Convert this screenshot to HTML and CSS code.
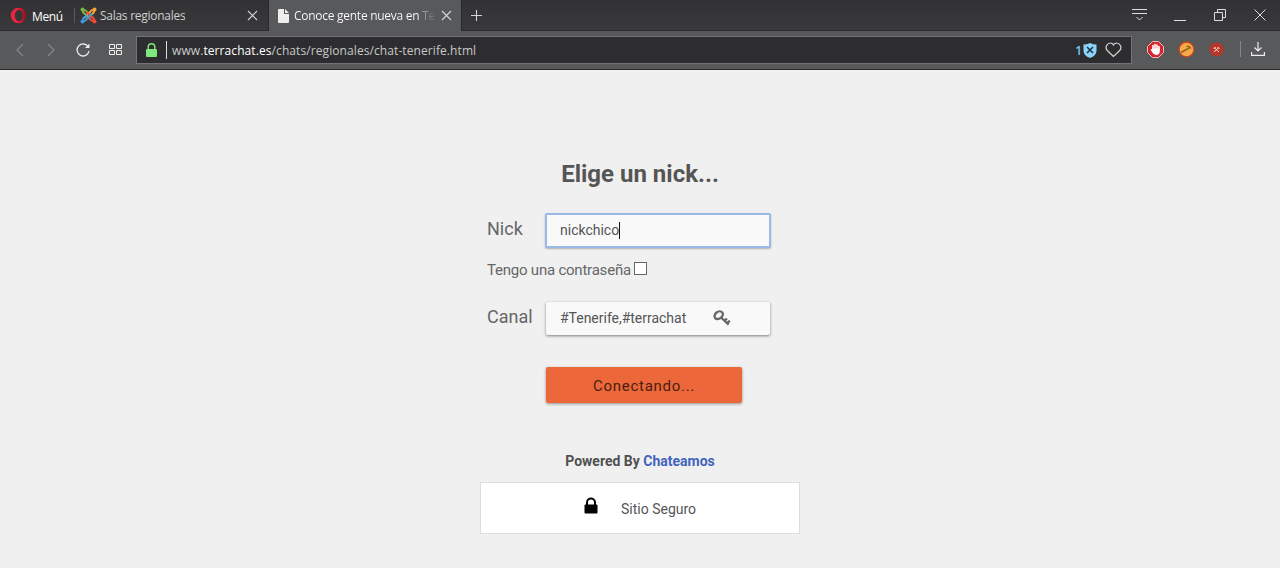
FILE: index.html
```html
<!DOCTYPE html>
<html lang="es">
<head>
<meta charset="utf-8">
<title>Conoce gente nueva en Terrachat</title>
<link rel="stylesheet" href="styles.css">
</head>
<body>
<header class="browser">
  <div class="tabs">
    <div class="menu">
      <svg class="opera" width="17" height="17" viewBox="0 0 17 17"><defs><linearGradient id="op" x1="0" x2="1"><stop offset=".4" stop-color="#ed2340"/><stop offset="1" stop-color="#8d101c"/></linearGradient></defs><path fill="url(#op)" fill-rule="evenodd" d="M8.500.7a7.800 7.800 0 1 0 0 15.600a7.800 7.800 0 1 0 0-15.600M8.800 3c2.400 0 3.900 2.300 3.900 5.500s-1.500 5.500-3.900 5.500s-3.900-2.300-3.900-5.500S6.400 3 8.800 3"/></svg>
      <span class="menu-text">Menú</span>
    </div>
    <div class="tab">
      <svg class="joomla" width="17" height="17" viewBox="0 0 17 17" fill="none" stroke-width="2" stroke-linejoin="round"><path stroke="#7cb342" d="M3 3Q2.500 6 5 7l6 5.500M3 3Q6 2.500 7 5l2 2"/><path stroke="#f9a334" d="M14 3Q11 2.500 10 5l-5.500 6M14 3Q14.500 6 12 7l-2 2"/><path stroke="#ef4a36" d="M14 14Q14.500 11 12 10L6.500 5M14 14Q11 14.500 10 12L8 10"/><path stroke="#4298d6" d="M3 14Q6 14.500 7 12l5-5.500M3 14Q2.500 11 5 10l2-2"/><g stroke="none"><circle cx="2.500" cy="2.500" r="2" fill="#7cb342"/><circle cx="14.500" cy="2.500" r="2" fill="#f9a334"/><circle cx="14.500" cy="14.500" r="2" fill="#ef4a36"/><circle cx="2.500" cy="14.500" r="2" fill="#4298d6"/></g></svg>
      <span class="tab-text first">Salas regionales</span>
      <svg class="close" width="11" height="11" viewBox="0 0 11 11"><path d="M1 1l9 9M10 1l-9 9"/></svg>
    </div>
    <div class="tab active">
      <svg class="page-icon" width="11" height="14" viewBox="0 0 11 14"><path fill="#eee" d="M1 0h5v5h5v8q0 1-1 1H1q-1 0-1-1V1q0-1 1-1M7 0l4 4H7z"/></svg>
      <span class="tab-text second">Conoce gente nueva en Te</span>
      <svg class="close" width="11" height="11" viewBox="0 0 11 11"><path d="M1 1l9 9M10 1l-9 9"/></svg>
    </div>
    <svg class="plus" width="11" height="11" viewBox="0 0 11 11"><path d="M5.500 0v11M0 5.500h11"/></svg>
    <div class="window">
      <svg width="15" height="12" viewBox="0 0 15 12"><path d="M0 .5h15M0 4.500h15M4.500 8l3 3 3-3"/></svg>
      <svg width="12" height="12" viewBox="0 0 12 12"><path d="M0 11.500h12"/></svg>
      <svg width="12" height="12" viewBox="0 0 12 12"><path d="M.5 3.500h8v8h-8zM3.500 3.500v-3h8v8h-3"/></svg>
      <svg width="12" height="12" viewBox="0 0 12 12"><path d="M.5.500l11 11M11.500.500l-11 11"/></svg>
    </div>
  </div>
  <div class="toolbar">
    <div class="nav">
      <svg class="dim" width="8" height="12" viewBox="0 0 8 12"><path d="M7 0L1 6l6 6"/></svg>
      <svg class="dim" width="8" height="12" viewBox="0 0 8 12"><path d="M1 0l6 6-6 6"/></svg>
      <svg width="14" height="14" viewBox="0 0 14 14"><path stroke-width="1.300" d="M12.300 4A6 6 0 1 0 13 8"/><path fill="#eee" stroke="none" d="M13.500.5v4.500H9z"/></svg>
      <svg width="13" height="12" viewBox="0 0 13 12"><path d="M.5.500h5v4h-5zM7.500.500h5v4h-5zM.5 6.500h5v4h-5zM7.500 6.500h5v4h-5z"/></svg>
    </div>
    <div class="address">
      <svg class="green-lock" width="11" height="15" viewBox="0 0 11 15"><rect y="6" width="11" height="8" rx="1" fill="#7ee87e"/><path fill="none" stroke="#7ee87e" stroke-width="1.400" d="M2.200 7V4a3.300 3.300 0 0 1 6.600 0v3"/></svg>
      <i class="divider"></i>
      <span class="url">www.<b>terrachat.es</b>/chats/regionales/chat-tenerife.html</span>
      <span class="count">1</span>
      <svg class="shield" width="14" height="15" viewBox="0 0 14 15"><path fill="#8bd3f7" d="M.5 1.500Q4 1.500 7 0q3 1.500 6.500 1.500V8q0 4.500-6.500 7Q.5 12.500.5 8z"/><path stroke="#173247" stroke-width="1.500" d="M4 4l6 6M10 4l-6 6"/></svg>
      <svg class="heart" width="17" height="16" viewBox="0 0 17 16"><path fill="none" stroke="#d5d5d5" stroke-width="1.200" d="M8.500 14.500L2.300 8.500C-.7 5.200 2.500 1 5.500 1q2 0 3 2 1-2 3-2c3 0 6.200 4.200 3.200 7.500z"/></svg>
    </div>
    <div class="extensions">
      <svg width="17" height="17" viewBox="0 0 17 17"><path fill="#d5262e" stroke="#f1b6b5" d="M5.500.500h6l5 5v6l-5 5h-6l-5-5v-6z"/><path fill="none" stroke="#fff" stroke-width="1.600" stroke-linecap="round" d="M6 9V4.500M8 8V3.500M10 8V4M12 9V5.500"/><path fill="#fff" d="M5.200 7.500h7.600v2.500q0 4-3.500 4Q6.500 14 5 11L3.500 8.500q.8-1 1.700.5z"/></svg>
      <svg width="17" height="17" viewBox="0 0 17 17"><circle cx="8.500" cy="8.500" r="7.500" fill="#f9a84a" stroke="#b8471f" stroke-width="1.400"/><path fill="none" stroke="#8d6824" stroke-width="1.500" d="M3 11.500L12 6.500M8.500 5.500q3-.8 4.500 2"/></svg>
      <svg width="15" height="15" viewBox="0 0 15 15"><circle cx="7.500" cy="7.500" r="7" fill="#b73529"/><path fill="none" stroke="#f5d9d3" stroke-width="1" d="M5 10l4.800-4.500M10 10L5.200 5.500M4.700 7l2-2M8.500 5l2 2"/></svg>
      <i class="split"></i>
      <svg width="14" height="14" viewBox="0 0 14 14"><path fill="none" stroke="#eee" stroke-width="1.200" d="M7 0v9M3.500 5.500L7 9l3.500-3.500M.6 10v3.400h12.800V10"/></svg>
    </div>
  </div>
</header>
<main class="content">
  <h1 class="title">Elige un nick...</h1>
  <form class="form">
    <div class="row">
      <span class="label">Nick</span>
      <div class="field focused"><span class="nick">nickchico</span><i class="caret"></i></div>
    </div>
    <div class="password"><span>Tengo una contraseña</span><i class="check"></i></div>
    <div class="row">
      <span class="label">Canal</span>
      <div class="field plain"><span class="channel">#Tenerife,#terrachat</span>
        <svg class="key" width="18" height="16" viewBox="0 0 18 16"><g fill="none" stroke="#686868"><ellipse cx="5.700" cy="5.200" rx="4.500" ry="3.400" stroke-width="2.400" transform="rotate(-38 5.700 5.200)"/><path stroke-width="2.300" d="M7.500 7l8.200 7.700M11.500 10.900l2.400-2.400M14 13.400l2.800-2.800"/></g></svg>
      </div>
    </div>
    <div class="connect">Conectando...</div>
  </form>
  <p class="powered">Powered By <span class="brand">Chateamos</span></p>
  <div class="secure">
    <svg width="14" height="17" viewBox="0 0 14 17"><rect x=".5" y="7.500" width="13" height="9" rx="1"/><path fill="none" stroke="#000" stroke-width="2" d="M3 8V5.500a4 4 0 0 1 8 0v2.500"/></svg>
    <span>Sitio Seguro</span>
  </div>
</main>
</body>
</html>
```
FILE: styles.css
```css
* { box-sizing: border-box; }
body { margin: 0; height: 568px; overflow: hidden; background: #f0f0f0; color: #666; font-family: Roboto, sans-serif; }
svg { display: block; flex: none; }
.browser { height: 70px; background: #58595b; border-bottom: 1px solid #29292a; font: 12px/16px "Open Sans", sans-serif; color: #fff; }
.tabs { display: flex; height: 31px; background: linear-gradient(#323234, #39393b); align-items: center; box-shadow: inset 0 -1px #2b2b2d; }
.menu { display: flex; align-items: center; width: 75px; height: 15px; padding-left: 10px; border-right: 1px solid #59595b; }
.menu-text { margin-left: 5px; padding-top: 2px; letter-spacing: -.35px; }
.tab { display: flex; align-items: center; height: 31px; width: 194px; padding: 0 10px 0 5px; border-right: 1px solid #29292b; }
.tab-text { white-space: nowrap; margin-left: 2px; overflow: hidden; color: #cfcfcf; letter-spacing: -.27px; }
.tab-text.first { margin-left: 3px; }
.tab.active { width: 193px; background: #58595b; padding: 0 9px; }
.tab-text.second { width: 142px; margin-left: 5px; color: transparent; letter-spacing: -.27px; background: linear-gradient(90deg, #fff 0 125px, #aaa 127px, #626365 142px); background-clip: text; }
.close, .plus { stroke: #d5d5d5; stroke-width: 1.1; fill: none; }
.close { margin-left: auto; }
.plus { margin-left: 9px; }
.window { display: flex; align-items: center; gap: 28px; margin-left: auto; padding: 0 14px 1px 0; fill: none; stroke: #ddd; }
.window svg { margin-bottom: 1px; }
.window svg:first-child { margin: 0 -1px 0 0; }
.toolbar { display: flex; height: 38px; align-items: center; }
.nav { display: flex; align-items: center; width: 136px; padding-left: 16px; gap: 23px; fill: none; stroke: #eee; }
.nav svg:nth-child(3) { margin-left: -2px; }
.nav svg:nth-child(4) { margin-left: -4px; }
.dim { stroke: #858688; stroke-width: 1.3; }
.address { display: flex; align-items: center; width: 996px; height: 28px; padding: 0 9px; background: #2d2d2f; border: 1px solid #747476; }
.divider { width: 1px; height: 18px; margin: 0 5px 0 9px; background: #ddd; }
.url { color: #c9c9c9; white-space: nowrap; letter-spacing: .085px; padding-top: 1px; }
.url b { color: #fff; font-weight: 400; }
.count { margin-left: auto; padding-top: 1px; color: #75c7f0; font-weight: 600; }
.shield { margin: 0 8px 0 1px; }
.extensions { display: flex; align-items: center; flex: 1; padding: 0 0 2px 15px; gap: 15px; }
.extensions svg:nth-child(2), .extensions svg:nth-child(3) { margin-left: -1px; }
.extensions svg:nth-child(3) { margin-right: 1px; }
.split { width: 1px; height: 16px; background: #858587; }
.extensions svg:last-child { margin-left: -5px; }
.content { width: 320px; margin: 0 auto; }
.title { margin: 90px 0 0; font: 700 24px/28px Roboto, sans-serif; color: #555; text-align: center; }
.form { padding: 25px 7px 0; }
.row { display: flex; height: 35px; }
.label { width: 58px; font-size: 18px; line-height: 31px; }
.field { display: flex; align-items: center; width: 226px; height: 35px; border-radius: 2px; background: #f9f9f9; font-size: 14px; color: #555; }
.focused { padding: 0 13px 1px; border: 2px solid #9bb8e8; box-shadow: 0 1px 2px #0004; }
.plain { width: 224px; height: 33px; margin: 1px 0 0 1px; padding: 0 14px 1px; box-shadow: 0 1px 3px #0007; }
.caret { width: 1px; height: 17px; background: #111; }
.channel { width: 127px; letter-spacing: -.02px; }
.key { margin-left: 26px; }
.password { display: flex; align-items: center; height: 44px; margin-bottom: 9px; font-size: 15px; letter-spacing: -.22px; }
.check { width: 13px; height: 13px; margin-left: 3px; margin-top: -3px; border: 1px solid #666; background: #fff; }
.connect { width: 196px; height: 36px; margin: 31px 0 0 59px; border-radius: 2px; background: #ec673a; box-shadow: 0 1px 3px #0006; color: #49200f; font-size: 15px; line-height: 38px; text-align: center; letter-spacing: .72px; }
.powered { margin: 50px 0 0; font: 700 14px/16px Roboto, sans-serif; color: #505050; text-align: center; }
.brand { color: #4164bd; }
.secure { display: flex; align-items: center; height: 52px; margin-top: 13px; padding-left: 103px; border: 1px solid #ddd; background: #fff; font-size: 14px; color: #555; }
.secure svg { margin-bottom: 5px; }
.secure span { margin-left: 23px; padding-top: 2px; }
```
